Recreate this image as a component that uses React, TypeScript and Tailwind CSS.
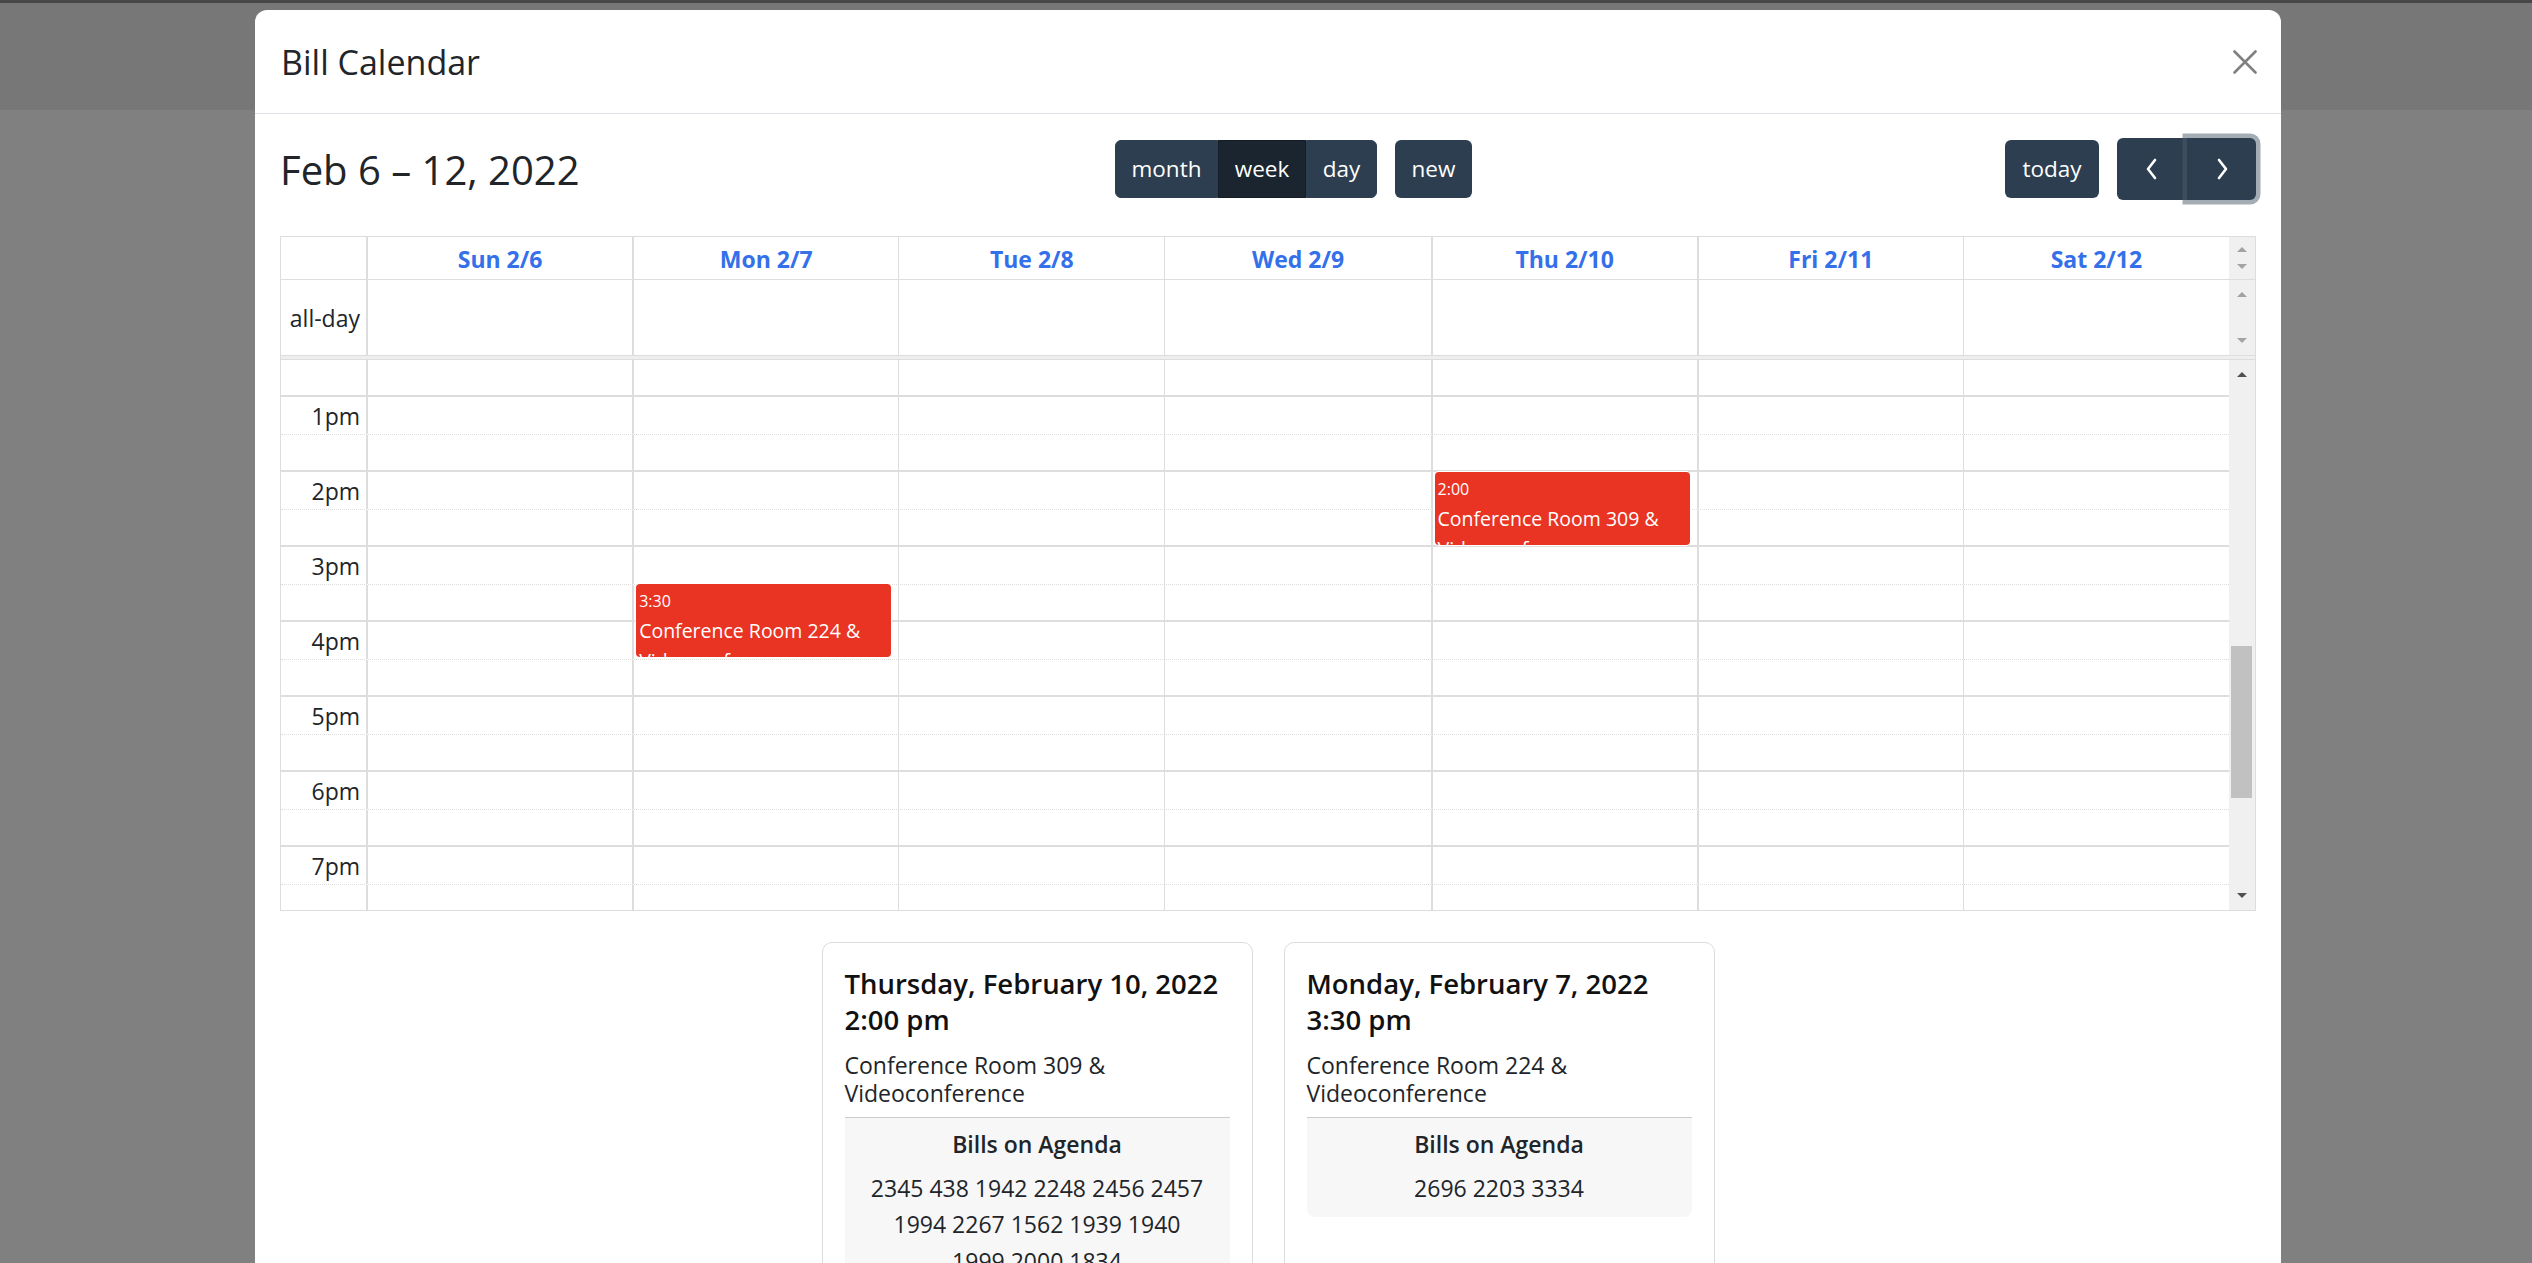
import React from "react";

const days = [
  { label: "Sun 2/6", line: "border-l-2" },
  { label: "Mon 2/7", line: "border-l-2" },
  { label: "Tue 2/8", line: "border-l" },
  { label: "Wed 2/9", line: "border-l" },
  { label: "Thu 2/10", line: "border-l-2" },
  { label: "Fri 2/11", line: "border-l-2" },
  { label: "Sat 2/12", line: "border-l" },
];

const hours = ["1pm", "2pm", "3pm", "4pm", "5pm", "6pm", "7pm", "8pm"];

const events = [
  { day: 1, top: 224, time: "3:30", title: "Conference Room 224 & Videoconference" },
  { day: 4, top: 112, time: "2:00", title: "Conference Room 309 & Videoconference" },
];

const cards = [
  {
    date: "Thursday, February 10, 2022",
    time: "2:00 pm",
    place: ["Conference Room 309 &", "Videoconference"],
    bills: ["2345 438 1942 2248 2456 2457", "1994 2267 1562 1939 1940", "1999 2000 1834"],
  },
  {
    date: "Monday, February 7, 2022",
    time: "3:30 pm",
    place: ["Conference Room 224 &", "Videoconference"],
    bills: ["2696 2203 3334"],
  },
];

function Arrow({ up, dark }: { up?: boolean; dark?: boolean }) {
  return (
    <svg width="10" height="6" viewBox="0 0 10 6" className={dark ? "text-[#505050]" : "text-[#a3a3a3]"}>
      <path d={up ? "M0 6 L5 1 L10 6 Z" : "M0 0 L5 5 L10 0 Z"} fill="currentColor" />
    </svg>
  );
}

function Chevron({ right }: { right?: boolean }) {
  return (
    <svg width="14" height="22" viewBox="0 0 14 22" fill="none" stroke="white" strokeWidth="2.6" strokeLinecap="round" strokeLinejoin="round">
      <path d={right ? "M4 2 L11 11 L4 20" : "M10 2 L3 11 L10 20"} />
    </svg>
  );
}

export default function App() {
  return (
    <div className="relative w-[2532px] h-[1263px] overflow-hidden bg-[#808080] font-['Open_Sans',sans-serif] text-[#212529]">
      {/* page behind the backdrop */}
      <div className="h-[110px] bg-[#777777] border-t-[3px] border-[#474747]" />

      {/* modal */}
      <div className="absolute left-[255px] top-[10px] w-[2026px] h-[1400px] bg-white rounded-[12px]">
        <div className="flex items-center justify-between h-[104px] border-b border-[#dee2e6] pl-[26px] pr-[24px]">
          <h5 className="text-[34px] leading-none">Bill Calendar</h5>
          <button type="button" className="w-[24px] h-[24px] flex items-center justify-center">
            <svg width="24" height="24" viewBox="0 0 24 24" stroke="#808080" strokeWidth="2.6" strokeLinecap="round">
              <path d="M1.5 1.5 L22.5 22.5 M22.5 1.5 L1.5 22.5" />
            </svg>
          </button>
        </div>

        <div className="px-[25px] pt-[24px]">
          {/* toolbar */}
          <div className="flex items-center justify-between h-[62px]">
            <h2 className="w-[302px] whitespace-nowrap text-[40px] leading-none pt-[2px]">Feb 6 – 12, 2022</h2>
            <div className="flex items-center gap-[18px] text-[22.5px] text-white">
              <div className="flex h-[58px]">
                <button className="w-[103px] bg-[#2c3e50] border border-[#2c3e50] rounded-l-[6px]">month</button>
                <button className="w-[88px] bg-[#1a252f] border border-[#151e27]">week</button>
                <button className="w-[71px] bg-[#2c3e50] border border-[#2c3e50] rounded-r-[6px]">day</button>
              </div>
              <button className="w-[77px] h-[58px] bg-[#2c3e50] rounded-[6px]">new</button>
            </div>
            <div className="flex items-center gap-[18px] text-[22.5px] text-white">
              <button className="w-[94px] h-[58px] bg-[#2c3e50] rounded-[6px]">today</button>
              <div className="flex h-[62px]">
                <button className="w-[70px] bg-[#2c3e50] rounded-l-[6px] flex items-center justify-center">
                  <Chevron />
                </button>
                <button className="relative z-10 w-[69px] bg-[#2c3e50] rounded-r-[6px] flex items-center justify-center shadow-[0_0_0_4.5px_rgba(76,91,106,0.5)]">
                  <Chevron right />
                </button>
              </div>
            </div>
          </div>

          {/* calendar */}
          <div className="mt-[36px] border border-[#ddd] text-[23px]">
            <div className="grid grid-cols-[85px_repeat(7,minmax(0,1fr))_26px] h-[43px] border-b border-[#ddd]">
              <div />
              {days.map((d) => (
                <div key={d.label} className={`${d.line} border-[#ddd] flex items-center justify-center pt-[2px] font-bold text-[#3470ea]`}>
                  {d.label}
                </div>
              ))}
              <div className="bg-[#f0f0f0] flex flex-col items-center justify-between py-[9px]">
                <Arrow up />
                <Arrow />
              </div>
            </div>
            <div className="grid grid-cols-[85px_repeat(7,minmax(0,1fr))_26px] h-[75px]">
              <div className="flex items-center justify-end pr-[6px] pt-[2px]">all-day</div>
              {days.map((d) => (
                <div key={d.label} className={`${d.line} border-[#ddd]`} />
              ))}
              <div className="bg-[#f0f0f0] flex flex-col items-center justify-between py-[11px]">
                <Arrow up />
                <Arrow />
              </div>
            </div>
            <div className="h-[5px] bg-[#eeeeee] border-y border-[#ddd]" />

            <div className="flex h-[550px]">
              <div className="relative flex-1 overflow-hidden">
                <div className="grid grid-cols-[85px_repeat(7,minmax(0,1fr))] h-[37px] border-b-2 border-[#ddd]">
                  <div />
                  {days.map((d) => (
                    <div key={d.label} className={`${d.line} border-[#ddd]`} />
                  ))}
                </div>
                {hours.map((h) => (
                  <div key={h}>
                    <div className="grid grid-cols-[85px_repeat(7,minmax(0,1fr))] h-[38px] border-b border-dotted border-[#ddd]">
                      <div className="flex items-center justify-end pr-[6px] pt-[2px]">{h}</div>
                      {days.map((d) => (
                        <div key={d.label} className={`${d.line} border-solid border-[#ddd]`} />
                      ))}
                    </div>
                    <div className="grid grid-cols-[85px_repeat(7,minmax(0,1fr))] h-[37px] border-b-2 border-[#ddd]">
                      <div />
                      {days.map((d) => (
                        <div key={d.label} className={`${d.line} border-[#ddd]`} />
                      ))}
                    </div>
                  </div>
                ))}

                {/* events layer */}
                <div className="absolute inset-0 grid grid-cols-[85px_repeat(7,minmax(0,1fr))] pointer-events-none">
                  <div />
                  {days.map((d, i) => (
                    <div key={d.label} className="relative">
                      {events
                        .filter((e) => e.day === i)
                        .map((e) => (
                          <div
                            key={e.time}
                            className="absolute left-[4px] right-[7px] h-[73px] overflow-hidden rounded-[4px] bg-[#e93323] text-white px-[3px] pt-[4px] shadow-[0_0_0_1px_white]"
                            style={{ top: e.top }}
                          >
                            <div className="text-[16px] leading-[26px] mb-[2px]">{e.time}</div>
                            <div className="text-[19.5px] leading-[30px]">{e.title}</div>
                          </div>
                        ))}
                    </div>
                  ))}
                </div>
              </div>
              <div className="w-[26px] bg-[#f0f0f0] flex flex-col">
                <div className="h-[28px] flex items-center justify-center">
                  <Arrow up dark />
                </div>
                <div className="flex-1 pt-[258px] pl-[2px] pr-[3px]">
                  <div className="h-[152px] bg-[#c1c1c1]" />
                </div>
                <div className="h-[28px] flex items-center justify-center">
                  <Arrow dark />
                </div>
              </div>
            </div>
          </div>

          {/* event cards */}
          <div className="flex justify-center gap-[31px] mt-[31px]">
            {cards.map((c) => (
              <div key={c.date} className="w-[431px] border border-[#dcdcdc] rounded-[10px] pt-[23px] px-[22px] pb-[60px]">
                <h5 className="text-[27.5px] leading-[36px] font-semibold text-[#111] whitespace-nowrap">
                  <div>{c.date}</div>
                  <div>{c.time}</div>
                </h5>
                <div className="mt-[14px] text-[23px] leading-[27.5px]">
                  {c.place.map((p) => (
                    <div key={p}>{p}</div>
                  ))}
                </div>
                <div className="mt-[10px] border-t border-[#cccccc] bg-[#f7f7f7] rounded-b-[8px] pt-[8px] pb-[11px] text-center text-[23px]">
                  <div className="font-semibold leading-[36px]">Bills on Agenda</div>
                  <div className="mt-[8px] leading-[36.3px]">
                    {c.bills.map((b) => (
                      <div key={b}>{b}</div>
                    ))}
                  </div>
                </div>
              </div>
            ))}
          </div>
        </div>
      </div>
    </div>
  );
}
